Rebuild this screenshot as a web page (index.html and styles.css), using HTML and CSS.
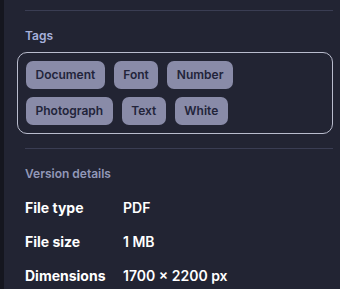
FILE: index.html
```html
<!DOCTYPE html>
<html lang="en">
<head>
    <meta charset="UTF-8">
    <meta name="viewport" content="width=device-width, initial-scale=1.0">
    <title>Details</title>
    <link rel="stylesheet" href="styles.css">
</head>
<body>
    <div class="edge"></div>
    <div class="panel">
        <hr class="divider">

        <h2 class="section-title tags-title">Tags</h2>
        <div class="tag-box">
            <span class="tag">Document</span>
            <span class="tag">Font</span>
            <span class="tag">Number</span>
            <span class="tag">Photograph</span>
            <span class="tag">Text</span>
            <span class="tag">White</span>
        </div>

        <hr class="divider">

        <h2 class="section-title">Version details</h2>
        <div class="details">
            <div class="row"><span class="label">File type</span><span class="value">PDF</span></div>
            <div class="row"><span class="label">File size</span><span class="value">1 MB</span></div>
            <div class="row"><span class="label">Dimensions</span><span class="value">1700 × 2200 px</span></div>
        </div>
    </div>
</body>
</html>
```

FILE: styles.css
```css
html, body {
    margin: 0;
    padding: 0;
    height: 100%;
    background-color: #222433;
    font-family: Inter, "Noto Sans", sans-serif;
}

body {
    display: flex;
    overflow: hidden;
}

.edge {
    width: 4px;
    flex-shrink: 0;
    background-color: #15161f;
}

.panel {
    flex: 1;
    padding: 10px 7px 0 13px;
}

.divider {
    margin: 0 0 0 8px;
    border: none;
    border-top: 1px solid #3a3d53;
}

.tag-box + .divider {
    margin-top: 14px;
}

.section-title {
    margin: 17px 0 0 8px;
    font-size: 12px;
    font-weight: 600;
    line-height: 15px;
    color: #9298b8;
}

.tags-title {
    color: #a7b1dc;
}

.tag-box {
    margin-top: 9px;
    border: 1px solid #b9bccd;
    border-radius: 10px;
    padding: 8px;
    display: flex;
    flex-wrap: wrap;
    gap: 8px 9px;
}

.tag {
    height: 28px;
    line-height: 28px;
    padding: 0 9.5px;
    border-radius: 7px;
    background-color: #898ba8;
    color: #22243a;
    font-size: 12px;
    font-weight: 600;
}

.details {
    margin-top: 9px;
    display: flex;
    flex-direction: column;
}

.row {
    display: flex;
    height: 34px;
    align-items: center;
    padding-left: 8px;
    font-size: 14px;
    font-weight: 700;
    color: #ffffff;
}

.label {
    width: 98px;
}

.value {
    font-weight: 600;
}
```
